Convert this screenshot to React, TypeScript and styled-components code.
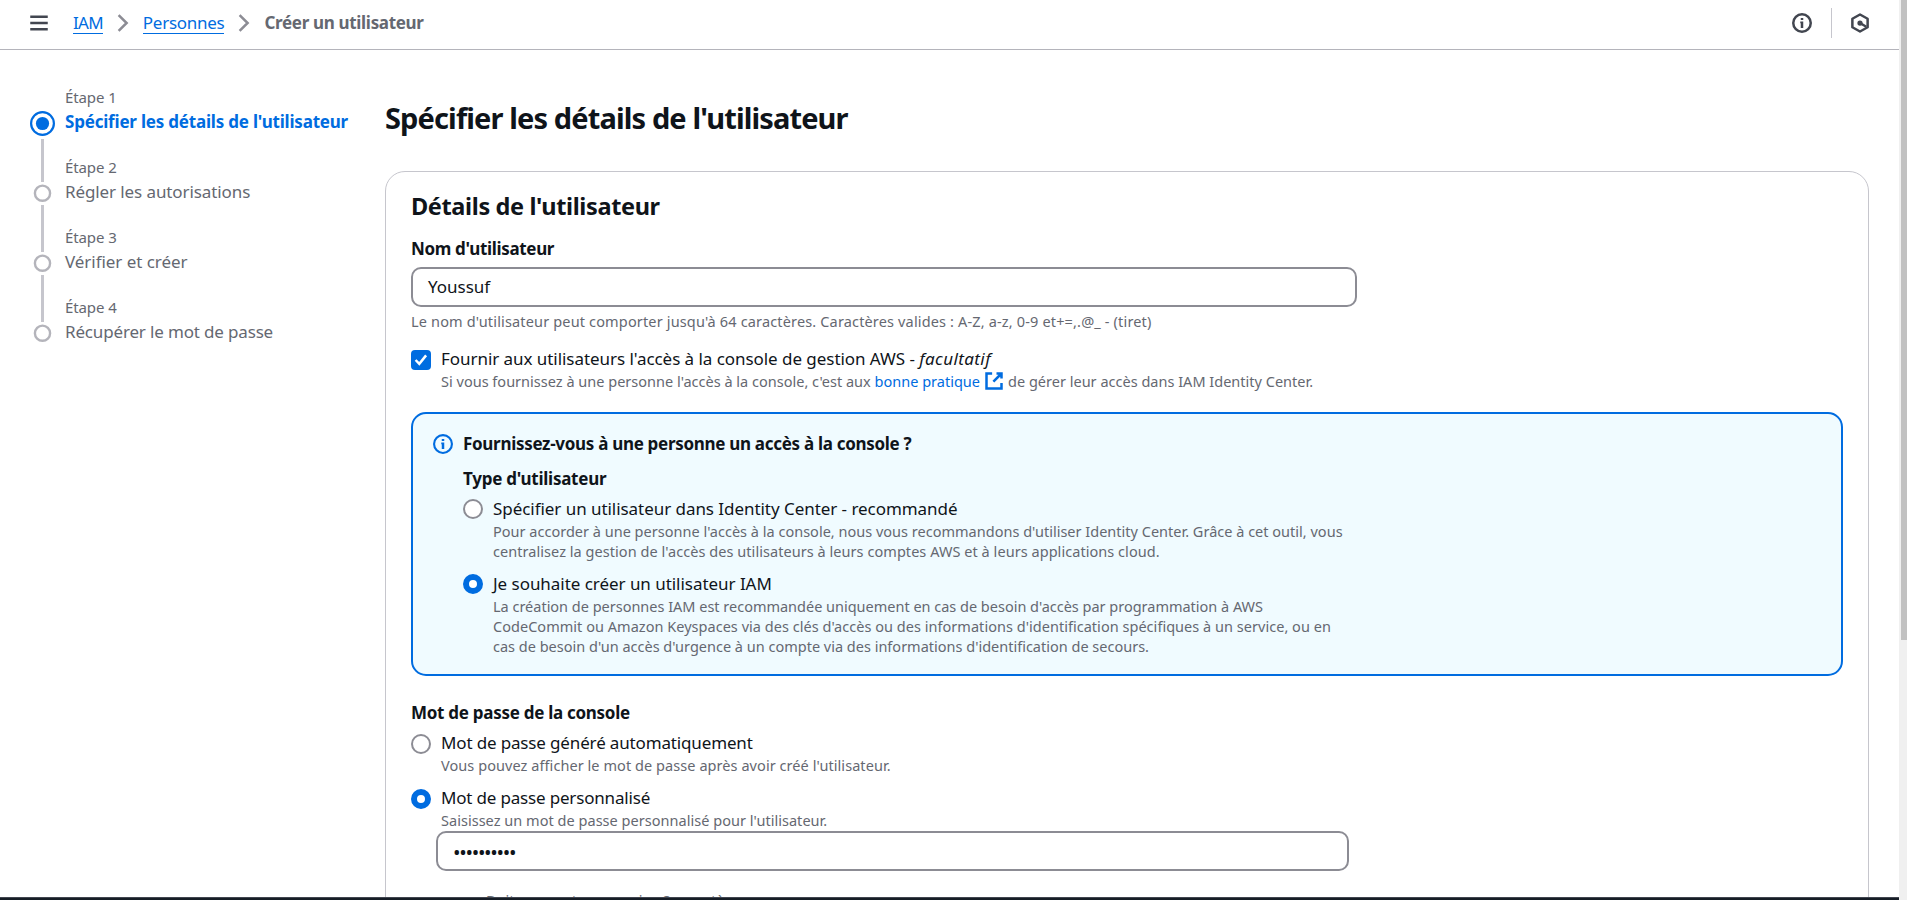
import React from 'react';
import styled, { createGlobalStyle, css } from 'styled-components';

const color = {
  text: '#0f141a',
  secondary: '#656871',
  link: '#006ce0',
  border: '#c6c6cd',
  control: '#8c8c94',
  icon: '#424650',
};

const GlobalStyle = createGlobalStyle`
  *, *::before, *::after { box-sizing: border-box; }
  body {
    margin: 0;
    background: #fff;
    color: ${color.text};
    font: 17px/25px "Noto Sans", "Open Sans", sans-serif;
    overflow: hidden;
  }
  h1, h2, h3, p, ol { margin: 0; padding: 0; }
`;

/* Letter spacing, in px, shared by every kind of text. */
type Tracked = { $track?: number };
const tracking = css<Tracked>`
  letter-spacing: ${({ $track = 0 }) => $track}px;
  white-space: nowrap;
`;

const Shell = styled.div`
  display: flex;
  height: 900px;
  overflow: hidden;
`;

const Page = styled.div`
  flex: 1;
  min-width: 0;
  display: flex;
  flex-direction: column;
`;

const ScrollTrack = styled.div`
  width: 8px;
  padding-left: 2px;
  background: #f0f0f0;
`;

const ScrollThumb = styled.div`
  height: 640px;
  background: #c1c1c1;
`;

const Footer = styled.div`
  flex: none;
  height: 3px;
  background: #161d26;
  border-top: 1px solid #424650;
`;

const Toolbar = styled.header`
  flex: none;
  display: flex;
  align-items: flex-start;
  height: 50px;
  padding: 0 29px;
  border-bottom: 1px solid #b4b4bb;
`;

const MenuButton = styled.span`
  display: flex;
  margin: 13px 24px 0 0;
  color: ${color.icon};
`;

const Breadcrumbs = styled.nav`
  display: flex;
  align-items: flex-start;
  gap: 10px;
  padding-top: 10px;
`;

const Crumb = styled.a<Tracked>`
  ${tracking}
  color: ${color.link};
  height: 24px;
  border-bottom: 1px solid ${color.link};
`;

const CurrentCrumb = styled.span<Tracked>`
  ${tracking}
  color: ${color.secondary};
  font-weight: 700;
`;

const CrumbSeparator = styled.span`
  display: flex;
  padding-top: 3px;
  color: ${color.control};
`;

const Tools = styled.div`
  display: flex;
  align-items: center;
  height: 30px;
  margin: 8px 0 0 auto;
  color: ${color.icon};
`;

const ToolDivider = styled.span`
  width: 1px;
  height: 30px;
  margin: 0 18px 0 19px;
  background: ${color.border};
`;

const Content = styled.div`
  flex: 1;
  min-height: 0;
  display: flex;
  overflow: hidden;
`;

const Steps = styled.ol`
  flex: none;
  width: 355px;
  margin: 37px 0 0 30px;
  list-style: none;
`;

const StepItem = styled.li`
  display: flex;
  gap: 10px;
  height: 70px;
`;

const Rail = styled.div`
  display: flex;
  flex-direction: column;
  align-items: center;
  width: 25px;
`;

const RailLine = styled.span<{ $height?: number; $hidden?: boolean }>`
  width: 3px;
  background: ${({ $hidden }) => ($hidden ? 'transparent' : color.border)};
  ${({ $height }) => ($height ? `height: ${$height}px;` : 'flex: 1;')}
`;

const StepMarker = styled.svg<{ $active: boolean }>`
  flex: none;
  margin: ${({ $active }) => ($active ? '0 0 3px' : '2px 0 3px')};
  color: ${({ $active }) => ($active ? color.link : '#b4b4bb')};
`;

const StepText = styled.div`
  color: ${color.secondary};
`;

const StepNumber = styled.div<Tracked>`
  ${tracking}
  height: 22px;
  font-size: 15px;
  line-height: 20px;
`;

const StepTitle = styled.div<Tracked & { $active: boolean }>`
  ${tracking}
  ${({ $active }) => $active && `color: ${color.link}; font-weight: 700;`}
`;

const Main = styled.main`
  width: 1484px;
  padding-top: 49px;
`;

const PageTitle = styled.h1<Tracked>`
  ${tracking}
  height: 72px;
  font-size: 29px;
  line-height: 37px;
`;

const Card = styled.section`
  height: 900px;
  padding: 19px 25px;
  border: 1px solid ${color.border};
  border-radius: 20px;
`;

const CardTitle = styled.h2<Tracked>`
  ${tracking}
  height: 45px;
  font-size: 23.5px;
  line-height: 30px;
`;

const FieldLabel = styled.h3<Tracked & { $gap: number }>`
  ${tracking}
  font-size: 17px;
  font-weight: 700;
  margin-bottom: ${({ $gap }) => $gap}px;
`;

const TextField = styled.div<{ $nested?: boolean }>`
  display: flex;
  align-items: center;
  width: ${({ $nested }) => ($nested ? 913 : 946)}px;
  height: 40px;
  margin: ${({ $nested }) => ($nested ? '1px 0 19px 25px' : '0')};
  padding: 0 15px 2px;
  border: 2px solid ${color.control};
  border-radius: 10px;
`;

const Masked = styled.span`
  padding-top: 5px;
  font-size: 20px;
  line-height: 20px;
  letter-spacing: -1.3px;
`;

const Small = styled.p<Tracked>`
  ${tracking}
  color: ${color.secondary};
  font-size: 14.5px;
  line-height: 20px;
`;

const Hint = styled(Small)`
  height: 39px;
  padding-top: 4px;
`;

const Requirement = styled(Small)`
  padding-left: 75px;
`;

const Option = styled.div<{ $controlTop: number; $gap?: number }>`
  display: grid;
  grid-template-columns: 20px auto;
  justify-content: start;
  column-gap: 10px;
  margin-bottom: ${({ $gap = 0 }) => $gap}px;
  > :first-child {
    margin-top: ${({ $controlTop }) => $controlTop}px;
  }
`;

const OptionLabel = styled.div<Tracked>`
  ${tracking}
`;

const Optional = styled.em<Tracked>`
  ${tracking}
`;

const Radio = styled.span<{ $checked?: boolean }>`
  width: 20px;
  height: 20px;
  border-radius: 50%;
  background: #fff;
  border: ${({ $checked }) => ($checked ? `6px solid ${color.link}` : `2px solid ${color.control}`)};
`;

const Checkbox = styled.span`
  display: grid;
  place-items: center;
  width: 20px;
  height: 20px;
  border-radius: 4px;
  background: ${color.link};
`;

const InlineLink = styled.a<Tracked>`
  ${tracking}
  color: ${color.link};
  svg {
    margin: 0 4px;
    vertical-align: top;
  }
`;

const Alert = styled.div`
  display: flex;
  align-items: flex-start;
  gap: 10px;
  width: 1432px;
  height: 264px;
  margin: 21px 0 24px;
  padding: 17px 20px;
  border: 2px solid ${color.link};
  border-radius: 15px;
  background: #f0fbff;
`;

const AlertIcon = styled.span`
  display: flex;
  padding-top: 3px;
  color: ${color.link};
`;

const Icon = ({ children, stroke = 2 }: { children: React.ReactNode; stroke?: number }) => (
  <svg width="20" height="20" viewBox="0 0 16 16" fill="none" stroke="currentColor" strokeWidth={stroke}>
    {children}
  </svg>
);

const MenuIcon = () => (
  <Icon><path d="M1 3h14M1 8h14M1 13h14" /></Icon>
);

const ChevronIcon = () => (
  <Icon><path d="m4.5 1.7 6.4 6.3-6.4 6.3" /></Icon>
);

const InfoIcon = ({ stroke = 2 }: { stroke?: number }) => (
  <Icon stroke={stroke}>
    <circle cx="8" cy="8" r={8 - stroke / 2} />
    <path d="M7 4h2v1.6H7zM6.6 6.8H9V12H7V8.2h-.4z" fill="currentColor" stroke="none" />
  </Icon>
);

const HexagonIcon = () => (
  <Icon>
    <path d="M8 1.2 14.1 4.6v6.8L8 14.8 1.9 11.4V4.6z" strokeLinejoin="round" />
    <circle cx="8" cy="8" r="2.1" fill="currentColor" stroke="none" />
    <path d="m8 8 5 3" />
  </Icon>
);

const ExternalIcon = () => (
  <Icon><path d="M10 2h4v4M7.5 8.5 14 2M14 9.5V14H2V2h4.5" /></Icon>
);

const CheckIcon = () => (
  <svg width="20" height="20" viewBox="0 0 20 20" fill="none" stroke="#fff" strokeWidth="2.5">
    <path d="m4.6 10 3.7 3.8 6.8-8.4" />
  </svg>
);

const StepDot = ({ active }: { active: boolean }) =>
  active ? (
    <StepMarker $active width="25" height="25">
      <circle cx="12.5" cy="12.5" r="11.4" fill="none" stroke="currentColor" strokeWidth="2.2" />
      <circle cx="12.5" cy="12.5" r="6.6" fill="currentColor" />
    </StepMarker>
  ) : (
    <StepMarker $active={false} width="25" height="18">
      <circle cx="12.5" cy="9.2" r="7.6" fill="none" stroke="currentColor" strokeWidth="2.4" />
    </StepMarker>
  );

const steps = [
  { title: "Spécifier les détails de l'utilisateur", track: -0.2 },
  { title: 'Régler les autorisations', track: -0.1 },
  { title: 'Vérifier et créer', track: -0.05 },
  { title: 'Récupérer le mot de passe', track: -0.16 },
];

export default function App() {
  return (
    <Shell>
      <GlobalStyle />
      <Page>
        <Toolbar>
          <MenuButton><MenuIcon /></MenuButton>
          <Breadcrumbs>
            <Crumb $track={-0.75}>IAM</Crumb>
            <CrumbSeparator><ChevronIcon /></CrumbSeparator>
            <Crumb $track={-0.27}>Personnes</Crumb>
            <CrumbSeparator><ChevronIcon /></CrumbSeparator>
            <CurrentCrumb $track={-0.32}>Créer un utilisateur</CurrentCrumb>
          </Breadcrumbs>
          <Tools>
            <InfoIcon />
            <ToolDivider />
            <HexagonIcon />
          </Tools>
        </Toolbar>

        <Content>
          <Steps>
            {steps.map(({ title, track }, i) => (
              <StepItem key={title}>
                <Rail>
                  <RailLine $height={i === 0 ? 24 : 25} $hidden={i === 0} />
                  <StepDot active={i === 0} />
                  <RailLine $hidden={i === steps.length - 1} />
                </Rail>
                <StepText>
                  <StepNumber $track={-0.1}>Étape {i + 1}</StepNumber>
                  <StepTitle $active={i === 0} $track={track}>{title}</StepTitle>
                </StepText>
              </StepItem>
            ))}
          </Steps>

          <Main>
            <PageTitle $track={-0.87}>Spécifier les détails de l'utilisateur</PageTitle>
            <Card>
              <CardTitle $track={-0.36}>Détails de l'utilisateur</CardTitle>

              <FieldLabel $gap={6} $track={-0.33}>Nom d'utilisateur</FieldLabel>
              <TextField>Youssuf</TextField>
              <Hint $track={0.155}>
                Le nom d'utilisateur peut comporter jusqu'à 64 caractères. Caractères valides : A-Z, a-z, 0-9 et+=,.@_ - (tiret)
              </Hint>

              <Option $controlTop={4}>
                <Checkbox><CheckIcon /></Checkbox>
                <div>
                  <OptionLabel $track={-0.05}>
                    Fournir aux utilisateurs l'accès à la console de gestion AWS - <Optional $track={0.4}>facultatif</Optional>
                  </OptionLabel>
                  <Small $track={0.01}>
                    Si vous fournissez à une personne l'accès à la console, c'est aux{' '}
                    <InlineLink $track={0.01}>bonne pratique<ExternalIcon /></InlineLink>
                    de gérer leur accès dans IAM Identity Center.
                  </Small>
                </div>
              </Option>

              <Alert>
                <AlertIcon><InfoIcon stroke={1.7} /></AlertIcon>
                <div>
                  <FieldLabel $gap={10} $track={-0.3}>Fournissez-vous à une personne un accès à la console ?</FieldLabel>
                  <FieldLabel $gap={5} $track={-0.25}>Type d'utilisateur</FieldLabel>
                  <Option $controlTop={3} $gap={10}>
                    <Radio />
                    <div>
                      <OptionLabel $track={-0.05}>Spécifier un utilisateur dans Identity Center - recommandé</OptionLabel>
                      <Small $track={0.01}>
                        Pour accorder à une personne l'accès à la console, nous vous recommandons d'utiliser Identity Center. Grâce à cet outil, vous
                      </Small>
                      <Small $track={0.05}>centralisez la gestion de l'accès des utilisateurs à leurs comptes AWS et à leurs applications cloud.</Small>
                    </div>
                  </Option>
                  <Option $controlTop={3}>
                    <Radio $checked />
                    <div>
                      <OptionLabel $track={-0.04}>Je souhaite créer un utilisateur IAM</OptionLabel>
                      <Small $track={-0.01}>La création de personnes IAM est recommandée uniquement en cas de besoin d'accès par programmation à AWS</Small>
                      <Small $track={0.03}>CodeCommit ou Amazon Keyspaces via des clés d'accès ou des informations d'identification spécifiques à un service, ou en</Small>
                      <Small>cas de besoin d'un accès d'urgence à un compte via des informations d'identification de secours.</Small>
                    </div>
                  </Option>
                </div>
              </Alert>

              <FieldLabel $gap={5} $track={-0.28}>Mot de passe de la console</FieldLabel>
              <Option $controlTop={4} $gap={10}>
                <Radio />
                <div>
                  <OptionLabel $track={-0.15}>Mot de passe généré automatiquement</OptionLabel>
                  <Small $track={0.065}>Vous pouvez afficher le mot de passe après avoir créé l'utilisateur.</Small>
                </div>
              </Option>
              <Option $controlTop={4}>
                <Radio $checked />
                <div>
                  <OptionLabel $track={-0.18}>Mot de passe personnalisé</OptionLabel>
                  <Small $track={0.03}>Saisissez un mot de passe personnalisé pour l'utilisateur.</Small>
                </div>
              </Option>
              <TextField $nested><Masked>••••••••••</Masked></TextField>
              <Requirement $track={0.07}>Doit comporter au moins 8 caractères</Requirement>
            </Card>
          </Main>
        </Content>
        <Footer />
      </Page>
      <ScrollTrack><ScrollThumb /></ScrollTrack>
    </Shell>
  );
}
